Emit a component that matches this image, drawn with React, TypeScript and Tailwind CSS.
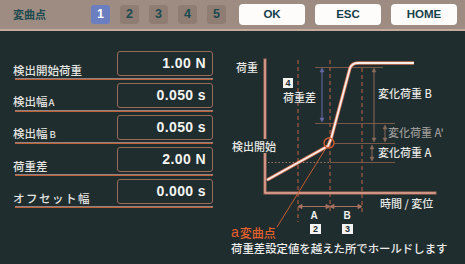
import React from 'react'

type Field = {
	label: React.ReactNode
	value: string
}

const fields: Field[] = [
	{ label: '検出開始荷重', value: '1.00 N' },
	{ label: <>検出幅<span className="text-[9.5px] ml-[1px]">A</span></>, value: '0.050 s' },
	{ label: <>検出幅<span className="text-[9.5px] ml-[2px]">B</span></>, value: '0.050 s' },
	{ label: '荷重差', value: '2.00 N' },
	{ label: <span className="tracking-[1.5px]">オフセット幅</span>, value: '0.000 s' },
]

const jp = { fontFamily: '"Noto Sans CJK JP", "Noto Sans", sans-serif' }

function Header() {
	return (
		<div className="h-[31px] bg-[#9e8c82] border-b-2 border-[#c4ab9e] flex items-center pl-[13px] pr-[8px]">
			<span className="text-[11px] font-bold text-[#1b4a50] w-[78px]" style={jp}>変曲点</span>
			<div className="flex gap-[10px]">
				{[1, 2, 3, 4, 5].map(n => (
					<div
						key={n}
						className={`w-[19px] h-[19px] rounded-[3px] flex items-center justify-center text-[12.5px] font-bold ${n === 1 ? 'bg-[#6a7ec0] text-white' : 'bg-[#8f7d73] text-[#1b4a50]'}`}
						style={{ fontFamily: '"Liberation Sans", sans-serif' }}
					>
						{n}
					</div>
				))}
			</div>
			<div className="flex gap-[10px] ml-auto">
				{['OK', 'ESC', 'HOME'].map(label => (
					<button
						key={label}
						className="w-[66px] h-[21px] rounded-[4px] bg-[#fdfcfa] text-[#15404a] text-[11.5px] font-bold flex items-center justify-center"
						style={{ fontFamily: '"Liberation Sans", sans-serif' }}
					>
						{label}
					</button>
				))}
			</div>
		</div>
	)
}

function FieldList() {
	return (
		<div className="w-[225px] pt-[17px] pl-[13px] flex flex-col">
			{fields.map((f, i) => (
				<div key={i} className="w-[200px]">
					<div className="h-[30px] pt-[3px] flex justify-between">
						<span className="self-end leading-[14px] mb-[1px] text-[11.5px] font-medium text-[#e4e4e0]" style={jp}>{f.label}</span>
						<div
							className="w-[96px] h-[25px] border border-[#9a6a58] rounded-[3px] flex items-center justify-end pr-[6px] text-[14px] font-bold text-[#f4f4f2] tracking-[0.4px]"
							style={{ fontFamily: '"Liberation Sans", sans-serif' }}
						>
							{f.value}
						</div>
					</div>
					<div className="ml-[2px] border-t border-[#8c8580] border-b border-b-[#c45f3a]" />
				</div>
			))}
		</div>
	)
}

function Arrow({ x, y1, y2, color }: { x: number; y1: number; y2: number; color: string }) {
	return (
		<g stroke={color} fill={color} strokeWidth={1}>
			<line x1={x} y1={y1 + 2} x2={x} y2={y2 - 2} />
			<path d={`M${x - 2},${y1 + 4} L${x},${y1} L${x + 2},${y1 + 4} Z`} strokeWidth={0.5} />
			<path d={`M${x - 2},${y2 - 4} L${x},${y2} L${x + 2},${y2 - 4} Z`} strokeWidth={0.5} />
		</g>
	)
}

function Chart() {
	const dash = '4 3'
	const textProps = { fontFamily: '"Noto Sans CJK JP", "Noto Sans", sans-serif', fontWeight: 500, dominantBaseline: 'central' as const }
	const latin = '"Liberation Sans", sans-serif'
	return (
		<svg width={240} height={233} viewBox="225 31 240 233" className="block">
			{/* reference lines */}
			<g stroke="#7a5848" strokeWidth={1}>
				<line x1={315} y1={67.5} x2={383} y2={67.5} />
				<line x1={315} y1={123.5} x2={395} y2={123.5} />
				<line x1={334} y1={143.5} x2={395} y2={143.5} />
				<line x1={330} y1={162.5} x2={395} y2={162.5} />
			</g>
			<line x1={268} y1={162.5} x2={329} y2={162.5} stroke="#9a7a68" strokeWidth={1} strokeDasharray="1.5 2" />

			{/* dashed verticals */}
			<g stroke="#a35a40" strokeWidth={1.2} strokeDasharray={dash}>
				<line x1={298} y1={60} x2={298} y2={222} />
				<line x1={330} y1={60} x2={330} y2={212} />
				<line x1={362} y1={68} x2={362} y2={212} />
			</g>

			{/* axes */}
			<g strokeLinecap="square">
				<path d="M265,60 L265,193 L435,193" fill="none" stroke="#b8705e" strokeWidth={3} />
				<path d="M265,60 L265,193 L435,193" fill="none" stroke="#e6b8a8" strokeWidth={1} />
			</g>

			{/* arrows */}
			<Arrow x={322} y1={68} y2={122} color="#6a6aaa" />
			<Arrow x={374} y1={68} y2={142} color="#8a6a5a" />
			<Arrow x={385} y1={125} y2={142} color="#8a6a5a" />
			<Arrow x={372} y1={145} y2={161} color="#8a6a5a" />

			{/* interval arrows */}
			<g stroke="#a87060" fill="#a87060" strokeWidth={1}>
				<line x1={298} y1={206.5} x2={362} y2={206.5} />
				<path d="M302,204.5 L298,206.5 L302,208.5 Z" />
				<path d="M326,204.5 L330,206.5 L326,208.5 Z" />
				<path d="M334,204.5 L330,206.5 L334,208.5 Z" />
				<path d="M358,204.5 L362,206.5 L358,208.5 Z" />
			</g>

			{/* leader */}
			<line x1={326} y1={148} x2={277} y2={227} stroke="#c45a30" strokeWidth={1} />

			{/* curve */}
			<path d="M267,180 L328,146 L331,139 L350,68 Q352,63 358,63 L414,63" fill="none" stroke="#d07050" strokeWidth={3.4} strokeLinejoin="round" />
			<path d="M267,180 L328,146 L331,139 L350,68 Q352,63 358,63 L414,63" fill="none" stroke="#f6eeea" strokeWidth={1.8} strokeLinejoin="round" />
			<circle cx={329} cy={143} r={5} fill="none" stroke="#d45a30" strokeWidth={1.4} />

			{/* labels */}
			<text x={236} y={67} fontSize={11} fill="#e8e8e4" {...textProps}>荷重</text>
			<rect x={231} y={139} width={50} height={14} fill="#1f2d2f" />
			<text x={232} y={146} fontSize={11} fill="#e8e8e4" {...textProps}>検出開始</text>

			<rect x={283} y={78} width={10} height={10} fill="#f4f4f4" />
			<text x={288} y={83} fontSize={9} fontWeight={700} fill="#1f2d2f" textAnchor="middle" fontFamily={latin} dominantBaseline="central">4</text>
			<text x={283} y={97} fontSize={11} fill="#e8e8e4" {...textProps}>荷重差</text>

			<text x={378} y={93} fontSize={11} fill="#e8e8e4" {...textProps}>変化荷重 B</text>
			<text x={388} y={132} fontSize={11} fill="#9c9a98" {...textProps}>変化荷重 A'</text>
			<text x={378} y={152} fontSize={11} fill="#e8e8e4" {...textProps}>変化荷重 A</text>
			<text x={380} y={203} fontSize={11} fill="#e8e8e4" {...textProps}>時間 / 変位</text>

			<text x={314} y={215} fontSize={10} fontWeight={700} fill="#f0f0f0" textAnchor="middle" fontFamily={latin} dominantBaseline="central">A</text>
			<text x={347} y={215} fontSize={10} fontWeight={700} fill="#f0f0f0" textAnchor="middle" fontFamily={latin} dominantBaseline="central">B</text>
			<rect x={310} y={224} width={11} height={10} fill="#f4f4f4" />
			<text x={315.5} y={229} fontSize={9} fontWeight={700} fill="#1f2d2f" textAnchor="middle" fontFamily={latin} dominantBaseline="central">2</text>
			<rect x={342} y={224} width={11} height={10} fill="#f4f4f4" />
			<text x={347.5} y={229} fontSize={9} fontWeight={700} fill="#1f2d2f" textAnchor="middle" fontFamily={latin} dominantBaseline="central">3</text>

			<text x={231} y={232} fill="#e8602c" {...textProps}>
				<tspan fontSize={14} fontFamily={latin}>a</tspan>
				<tspan fontSize={12} dx={1}>変曲点</tspan>
			</text>
			<text x={231} y={248} fontSize={11.4} fill="#ececea" {...textProps}>荷重差設定値を越えた所でホールドします</text>
		</svg>
	)
}

export default function App() {
	return (
		<div className="w-[465px] h-[264px] overflow-hidden bg-[#1f2d2f] flex flex-col">
			<Header />
			<div className="flex flex-1">
				<FieldList />
				<Chart />
			</div>
		</div>
	)
}
